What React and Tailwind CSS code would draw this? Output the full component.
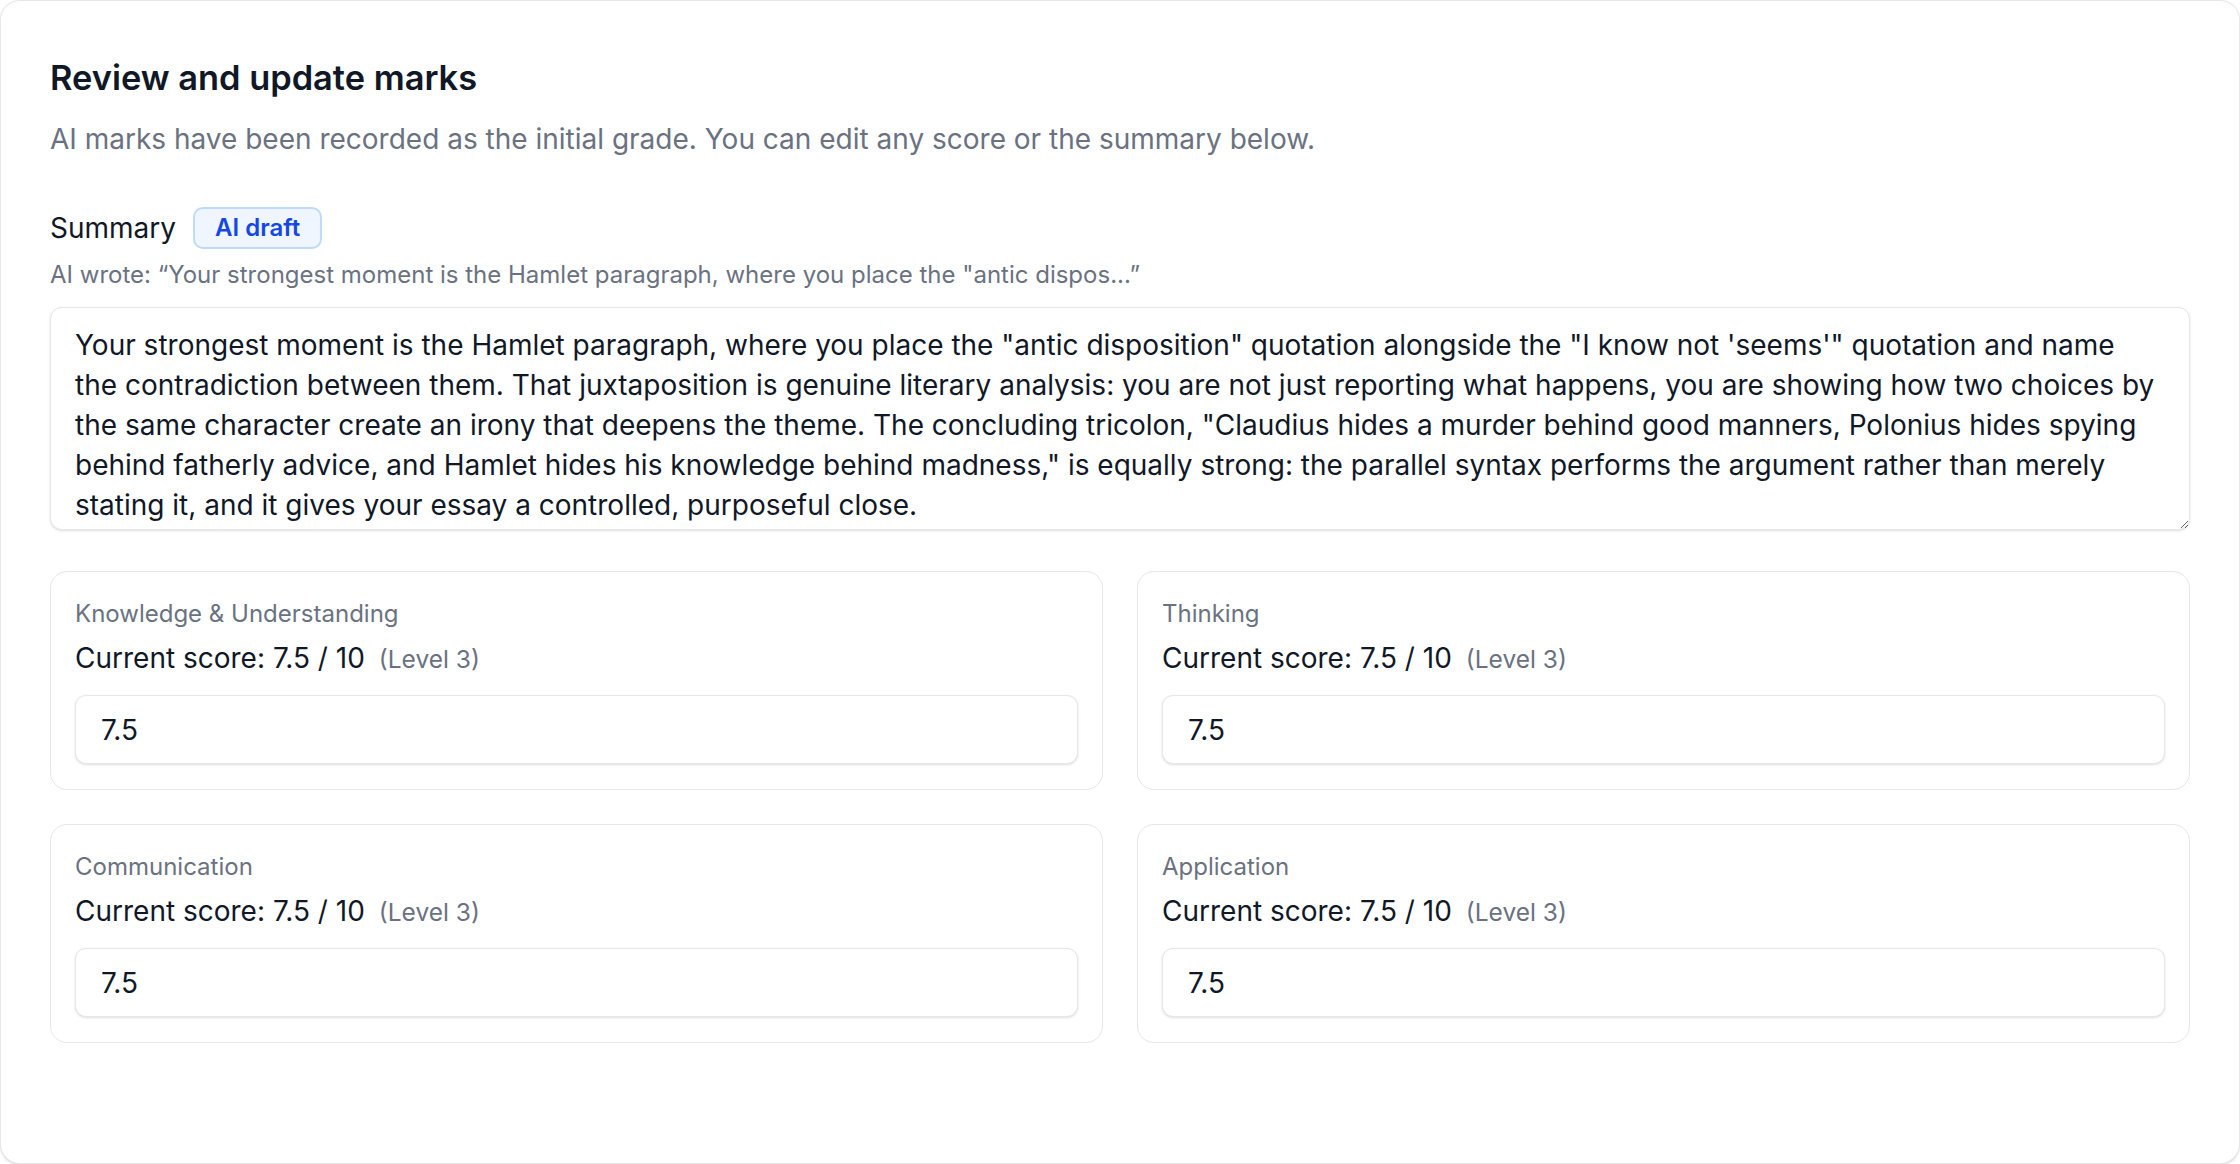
import React from "react";

const summaryText =
  'Your strongest moment is the Hamlet paragraph, where you place the "antic disposition" quotation alongside the "I know not \'seems\'" quotation and name the contradiction between them. That juxtaposition is genuine literary analysis: you are not just reporting what happens, you are showing how two choices by the same character create an irony that deepens the theme. The concluding tricolon, "Claudius hides a murder behind good manners, Polonius hides spying behind fatherly advice, and Hamlet hides his knowledge behind madness," is equally strong: the parallel syntax performs the argument rather than merely stating it, and it gives your essay a controlled, purposeful close.';

// one criterion card
const ScoreCard = ({ label, score, max, level }) => (
  <div className="rounded-[17px] border border-gray-200 bg-white px-[24px] pt-[25px] pb-[25px]">
    <div className="text-[24px] leading-[34px] text-gray-500">{label}</div>
    <div className="mt-[7px] flex items-baseline text-[28px] leading-[40px] text-gray-900">
      <span>
        Current score: {score} / {max}
      </span>
      <span className="ml-[14px] text-[24.5px] text-gray-500">(Level {level})</span>
    </div>
    <input
      type="text"
      defaultValue={score}
      className="mt-[16px] block h-[69px] w-full rounded-[11px] border border-gray-200 bg-white px-[25px] text-[28px] text-gray-900 shadow-sm outline-none"
    />
  </div>
);

export default function App() {
  const criteria = [
    { label: "Knowledge & Understanding", score: "7.5", max: 10, level: 3 },
    { label: "Thinking", score: "7.5", max: 10, level: 3 },
    { label: "Communication", score: "7.5", max: 10, level: 3 },
    { label: "Application", score: "7.5", max: 10, level: 3 },
  ];

  return (
    <div className="bg-white font-[Inter,sans-serif]">
      <div className="box-border min-h-screen w-full rounded-[20px] border border-gray-200 bg-white px-[49px] pt-[53px] shadow-sm">
        <h1 className="text-[34.4px] leading-[48px] font-semibold text-gray-900">
          Review and update marks
        </h1>
        <p className="mt-[17px] text-[28px] leading-[40px] text-gray-500">
          AI marks have been recorded as the initial grade. You can edit any score or the summary below.
        </p>

        <div className="mt-[48px] flex items-center gap-[17px]">
          <span className="text-[28px] leading-[40px] text-gray-900">Summary</span>
          <span className="rounded-[10px] border-2 border-blue-200 bg-blue-50 px-[20px] py-[3px] text-[24px] leading-[32px] font-semibold text-blue-700">
            AI draft
          </span>
        </div>
        <p className="mt-[11px] text-[24px] leading-[30px] text-gray-500">
          AI wrote: “Your strongest moment is the Hamlet paragraph, where you place the "antic dispos...”
        </p>

        <textarea
          defaultValue={summaryText}
          className="mt-[17px] block h-[223px] w-full overflow-hidden rounded-[12px] border border-gray-200 bg-white pl-[24px] pr-[30px] pt-[17px] text-[28px] leading-[40px] text-gray-900 shadow-sm outline-none"
        />

        <div className="mt-[41px] grid grid-cols-2 gap-[34px]">
          {criteria.map((c) => (
            <ScoreCard key={c.label} {...c} />
          ))}
        </div>
      </div>
    </div>
  );
}
